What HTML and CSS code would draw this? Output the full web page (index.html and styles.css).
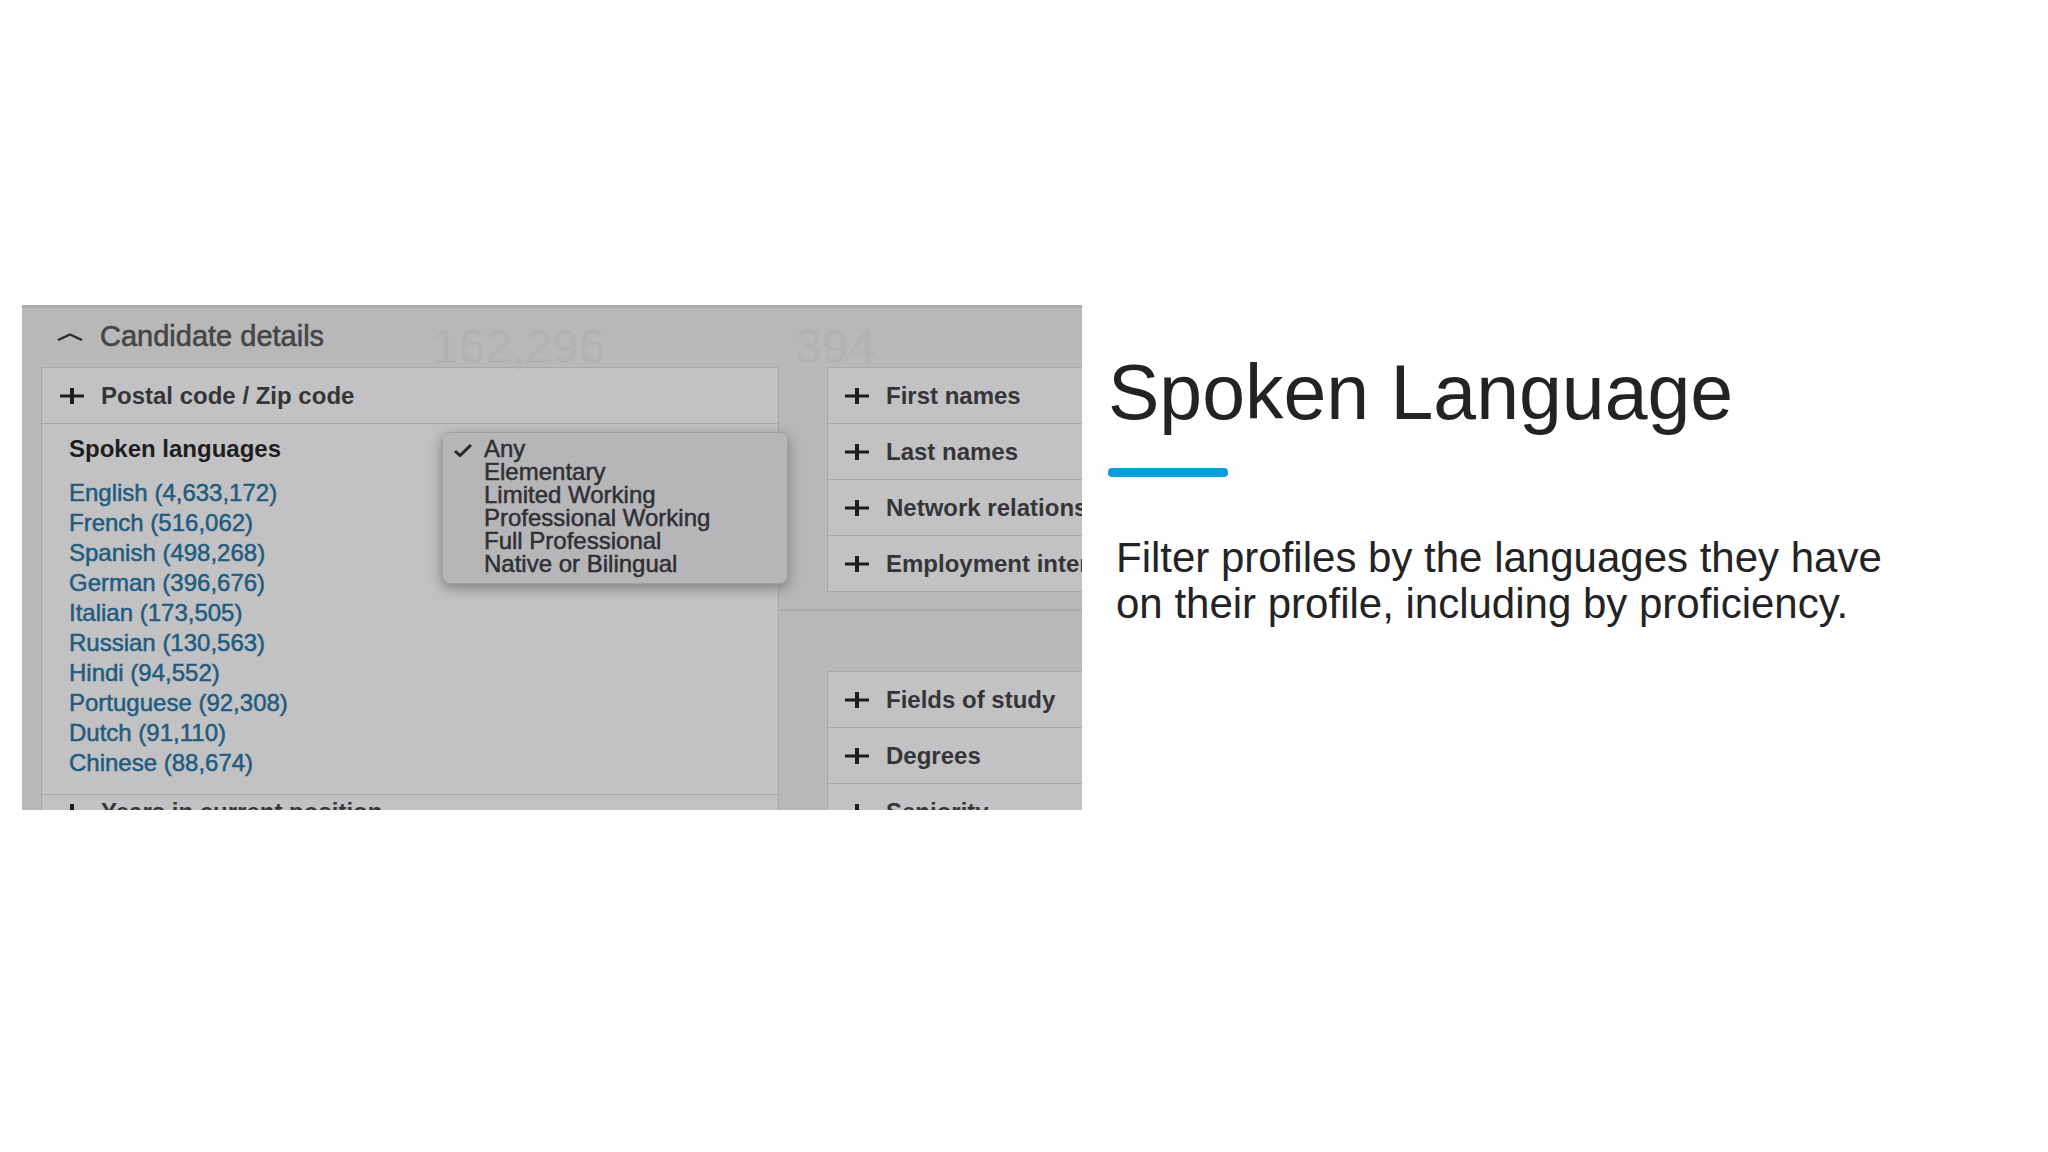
FILE: index.html
```html
<!DOCTYPE html>
<html lang="en">
<head>
  <meta charset="UTF-8">
  <meta name="viewport" content="width=device-width, initial-scale=1.0">
  <title>Spoken Language</title>
  <link rel="stylesheet" href="styles.css">
</head>
<body>
  <svg class="symbols" aria-hidden="true">
    <symbol id="plus" viewBox="0 0 24 16">
      <path d="M0 8H24" stroke="currentColor" stroke-width="3"/>
      <path d="M12 0V16" stroke="currentColor" stroke-width="4"/>
    </symbol>
  </svg>

  <main class="slide">
    <section class="panel">
      <span class="ghost ghost-total" aria-hidden="true">162,296</span>
      <span class="ghost ghost-new" aria-hidden="true">394</span>

      <button class="panel-title">
        <svg class="chevron" viewBox="0 0 26 8" aria-hidden="true">
          <path d="M1 7L13 1.5L25 7" fill="none" stroke="currentColor" stroke-width="2.4"/>
        </svg>
        Candidate details
      </button>

      <div class="columns">
        <div class="card card-left">
          <button class="row"><svg class="plus"><use href="#plus"/></svg>Postal code / Zip code</button>
          <div class="languages">
            <label class="languages-title" for="proficiency">Spoken languages</label>
            <ul class="language-list">
              <li><a href="#">English (4,633,172)</a></li>
              <li><a href="#">French (516,062)</a></li>
              <li><a href="#">Spanish (498,268)</a></li>
              <li><a href="#">German (396,676)</a></li>
              <li><a href="#">Italian (173,505)</a></li>
              <li><a href="#">Russian (130,563)</a></li>
              <li><a href="#">Hindi (94,552)</a></li>
              <li><a href="#">Portuguese (92,308)</a></li>
              <li><a href="#">Dutch (91,110)</a></li>
              <li><a href="#">Chinese (88,674)</a></li>
            </ul>
            <!-- Proficiency menu -->
            <div class="menu">
              <svg class="check" viewBox="0 0 18 13" aria-hidden="true">
                <path d="M1 7L6 11.5L17 1" fill="none" stroke="currentColor" stroke-width="3"/>
              </svg>
              <select class="menu-list" id="proficiency" size="6">
                <option selected>Any</option>
                <option>Elementary</option>
                <option>Limited Working</option>
                <option>Professional Working</option>
                <option>Full Professional</option>
                <option>Native or Bilingual</option>
              </select>
            </div>
          </div>
          <button class="row row-short"><svg class="plus"><use href="#plus"/></svg>Years in current position</button>
        </div>

        <div class="column-right">
          <div class="card card-right">
            <button class="row"><svg class="plus"><use href="#plus"/></svg>First names</button>
            <button class="row"><svg class="plus"><use href="#plus"/></svg>Last names</button>
            <button class="row"><svg class="plus"><use href="#plus"/></svg>Network relationships</button>
            <button class="row"><svg class="plus"><use href="#plus"/></svg>Employment interests</button>
          </div>
          <hr class="divider">
          <div class="card card-right">
            <button class="row"><svg class="plus"><use href="#plus"/></svg>Fields of study</button>
            <button class="row"><svg class="plus"><use href="#plus"/></svg>Degrees</button>
            <button class="row"><svg class="plus"><use href="#plus"/></svg>Seniority</button>
          </div>
        </div>
      </div>
    </section>

    <section class="intro">
      <h1>Spoken Language</h1>
      <div class="accent"></div>
      <p>Filter profiles by the languages they have on their profile, including by proficiency.</p>
    </section>
  </main>
</body>
</html>
```
FILE: styles.css
```css
* {
  box-sizing: border-box;
}

body {
  margin: 0;
  font-family: "Liberation Sans", Arial, sans-serif;
  background-color: #fefefe;
  color: #232326;
}

button {
  border: none;
  background: none;
  font-family: inherit;
  cursor: pointer;
}

.symbols {
  display: none;
}

.slide {
  display: grid;
  grid-template-columns: 1060fr 900fr;
  gap: 26px;
  padding: 305px 40px 0 22px;
}

/* Filter panel */
.panel {
  position: relative;
  height: 505px;
  overflow: hidden;
  border-top: 3px solid #aaaaab;
  background-color: #b8b8b9;
}

.panel-title {
  display: flex;
  align-items: center;
  gap: 17px;
  height: 59px;
  padding: 0 0 2px 35px;
  font-size: 29px;
  color: #454547;
  -webkit-text-stroke: 0.6px #454547;
}

.chevron {
  width: 26px;
  height: 8px;
  color: #2b2b2d;
}

/* Numbers showing through the dimmed panel */
.ghost {
  position: absolute;
  top: 15px;
  font-size: 48px;
  line-height: 48px;
  color: #b2b2b3;
}

.ghost-total {
  left: 410px;
}

.ghost-new {
  left: 773px;
}

.columns {
  display: grid;
  grid-template-columns: 738fr 255fr;
  gap: 48px;
  padding-left: 19px;
}

.column-right {
  min-width: 0;
}

.card {
  border: 1px solid #a8a8aa;
  background-color: #c2c2c4;
}

.card-right {
  border-right: none;
  overflow: hidden;
}

.row {
  display: flex;
  align-items: center;
  gap: 17px;
  width: 100%;
  height: 56px;
  padding: 0 0 0 18px;
  border-bottom: 1px solid #a8a8aa;
  font-size: 24px;
  font-weight: bold;
  white-space: nowrap;
  color: #353537;
}

.card-right .row {
  padding-left: 17px;
}

.card-right .row:last-child {
  height: 55px;
  border-bottom: none;
}

.row-short {
  height: 34px;
}

.plus {
  flex: none;
  width: 24px;
  height: 16px;
  color: #1c1c1e;
}

.divider {
  height: 2px;
  margin: 17px 0 60px -47px;
  border: none;
  background-color: #abacad;
}

.languages {
  position: relative;
  height: 371px;
  padding: 10px 27px;
  border-bottom: 1px solid #a8a8aa;
}

.languages-title {
  font-size: 24px;
  line-height: 30px;
  font-weight: bold;
  color: #1e1e20;
}

.language-list {
  margin: 14px 0 0;
  padding: 0;
  list-style: none;
  font-size: 24px;
  line-height: 30px;
}

.language-list a {
  color: #1f5c80;
  text-decoration: none;
  -webkit-text-stroke: 0.5px #1f5c80;
}

.menu {
  position: absolute;
  top: 8px;
  right: -10px;
  width: 346px;
  padding: 2px 0;
  border: 1px solid #a09fa2;
  border-radius: 8px;
  background-color: #b6b5b8;
  box-shadow: 0 4px 14px rgba(0, 0, 0, 0.35);
}

.menu-list {
  display: block;
  width: 100%;
  height: 146px;
  padding: 0;
  border: none;
  outline: none;
  overflow: hidden;
  background: transparent;
  font-family: inherit;
  font-size: 24px;
}

.menu-list option {
  height: 23px;
  min-height: 23px;
  padding: 0 0 0 41px;
  line-height: 23px;
  overflow: visible;
  color: #303033;
  -webkit-text-stroke: 0.5px #303033;
}

.menu-list option:checked {
  background: #b6b5b8 linear-gradient(#b6b5b8, #b6b5b8);
  color: #303033;
}

.check {
  position: absolute;
  top: 11px;
  left: 11px;
  width: 18px;
  height: 13px;
  color: #29292b;
}

/* Text beside the panel */
.intro h1 {
  margin: 43px 0 0;
  font-size: 77px;
  line-height: 88px;
  font-weight: normal;
}

.accent {
  width: 120px;
  height: 9px;
  margin-top: 32px;
  border-radius: 4px;
  background-color: #069fd9;
}

.intro p {
  max-width: 820px;
  margin: 58px 0 0;
  padding-left: 8px;
  font-size: 42px;
  line-height: 46px;
}
```
